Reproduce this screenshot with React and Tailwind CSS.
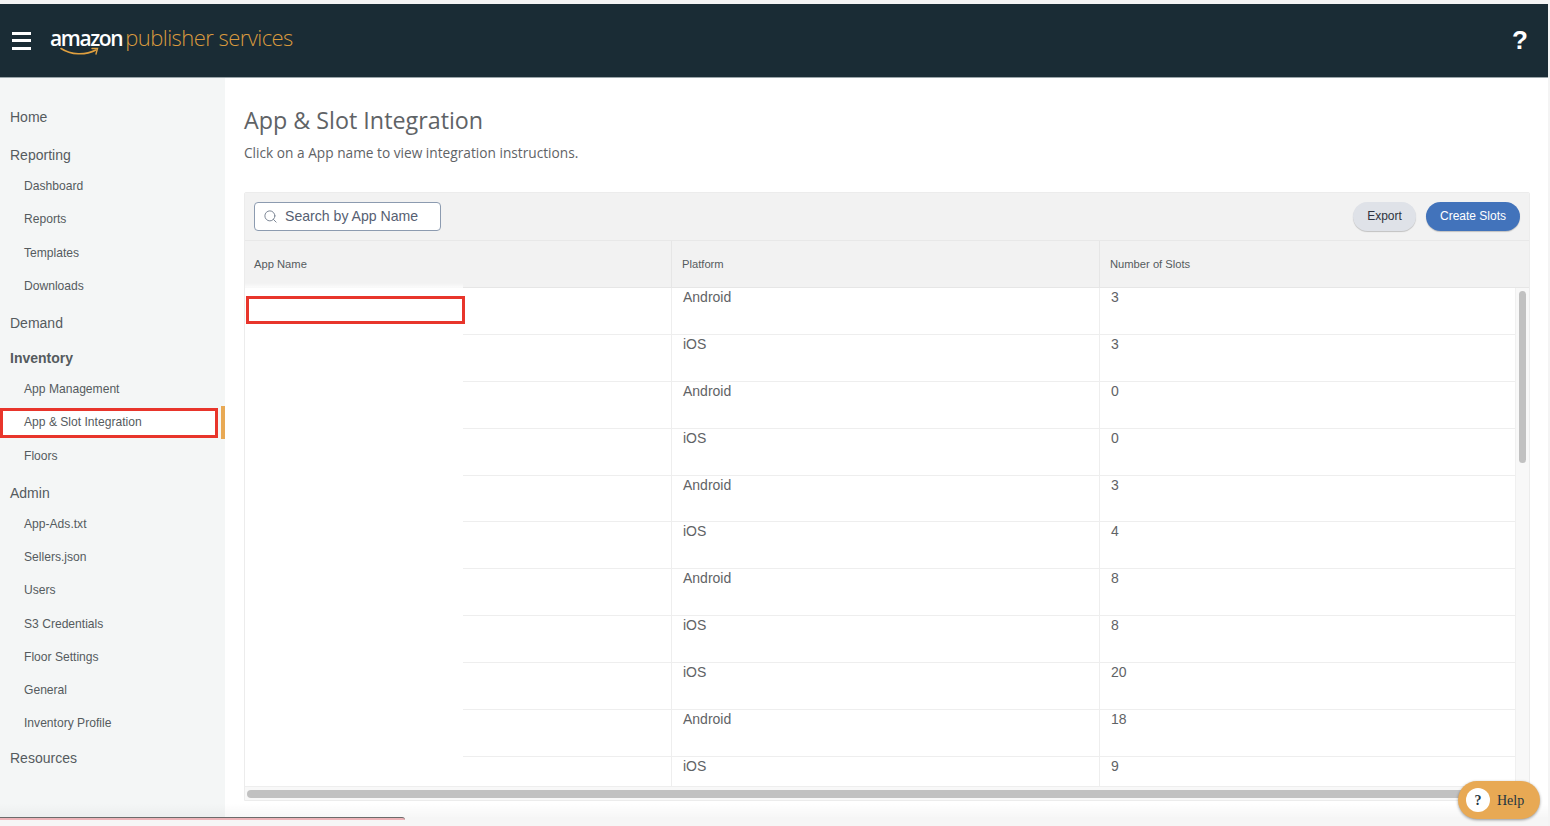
import { Search } from 'lucide-react'

const rows = [
  ['Android', '3'],
  ['iOS', '3'],
  ['Android', '0'],
  ['iOS', '0'],
  ['Android', '3'],
  ['iOS', '4'],
  ['Android', '8'],
  ['iOS', '8'],
  ['iOS', '20'],
  ['Android', '18'],
  ['iOS', '9'],
]

const nav = [
  { label: 'Home', mt: 'mt-[28px]' },
  { label: 'Reporting', mt: 'mt-[16px]', items: ['Dashboard', 'Reports', 'Templates', 'Downloads'] },
  { label: 'Demand', mt: 'mt-[9px]' },
  { label: 'Inventory', mt: 'mt-[13px]', bold: true, items: ['App Management', 'App & Slot Integration', 'Floors'] },
  {
    label: 'Admin',
    mt: 'mt-[9px]',
    items: ['App-Ads.txt', 'Sellers.json', 'Users', 'S3 Credentials', 'Floor Settings', 'General', 'Inventory Profile'],
  },
  { label: 'Resources', mt: 'mt-[6px]' },
]

function Sidebar() {
  return (
    <aside className="w-[225px] shrink-0 bg-[#f4f6f6] font-['Liberation_Sans',sans-serif] text-[#555b5e]">
      {nav.map((group) => (
        <div key={group.label} className={group.mt}>
          <div className={`h-[22px] pl-[10px] text-[14px] leading-[22px] ${group.bold ? 'font-bold' : ''}`}>
            {group.label}
          </div>
          {group.items && (
            <ul className="mt-1">
              {group.items.map((item) => (
                <li key={item} className="relative h-[33.25px] pl-6 text-[12.1px] leading-[33.25px]">
                  {item === 'App & Slot Integration' && (
                    <>
                      <span className="absolute left-0 top-[2px] h-[30px] w-[218px] border-[3px] border-[#e8352b] bg-white" />
                      <span className="absolute left-[221px] top-0 h-[33px] w-1 bg-[#e8a954]" />
                    </>
                  )}
                  <span className="relative">{item}</span>
                </li>
              ))}
            </ul>
          )}
        </div>
      ))}
    </aside>
  )
}

function Table() {
  return (
    <div className="relative mt-[30px] h-[609px] w-[1286px] overflow-hidden rounded-t-[2px] border border-[#ececec] font-['Liberation_Sans',sans-serif]">
      <div className="flex h-[48px] items-center justify-between border-b border-[#e8e8e8] bg-[#f2f2f2] pl-[9px] pr-[9px]">
        <div className="flex h-[29px] w-[187px] items-center gap-[7px] rounded-[4px] border border-[#8c9bb0] bg-white pl-2 text-[14.1px] text-[#566072]">
          <Search size={15} strokeWidth={1.6} className="text-[#7d8796]" />
          Search by App Name
        </div>
        <div className="flex items-center gap-[10px] text-[12px]">
          <button className="h-[29px] w-[63px] rounded-full bg-[#dfe2e8] pb-px text-[#2d3340] shadow-[0_1px_1px_rgba(0,0,0,0.2)]">
            Export
          </button>
          <button className="h-[29px] w-[94px] rounded-full bg-[#4273bb] pb-px text-white shadow-[0_1px_1px_rgba(0,0,0,0.2)]">
            Create Slots
          </button>
        </div>
      </div>
      <div className="grid h-[47px] grid-cols-[426px_428px_1fr] items-center border-b border-[#e6e6e6] bg-[#f2f2f2] text-[11.2px] text-[#555b5e]">
        <div className="pl-[9px]">App Name</div>
        <div className="flex h-full items-center border-l border-[#e6e6e6] pl-[10px]">Platform</div>
        <div className="flex h-full items-center border-l border-[#e6e6e6] pl-[10px]">Number of Slots</div>
      </div>
      <div className="absolute left-0 top-[90px] h-[6px] w-[218px] bg-gradient-to-b from-transparent to-white" />
      <div className="flex h-[498px]">
        <div className="h-full w-[218px] shrink-0 bg-white" />
        <div className="h-full flex-1 overflow-hidden">
          {rows.map((row, i) => (
            <div
              key={i}
              className="grid h-[46.9px] grid-cols-[208px_428px_1fr] border-b border-[#eeeeee] text-[14px] leading-[18px] text-[#5f6366]"
            >
              <div />
              <div className="border-l border-[#eeeeee] pl-[11px]">{row[0]}</div>
              <div className="border-l border-[#eeeeee] pl-[11px]">{row[1]}</div>
            </div>
          ))}
        </div>
        <div className="h-full w-[14px] shrink-0 border-l border-[#f0f0f0] bg-[#f8f8f8] px-[3px] pt-[3px]">
          <div className="h-[172px] rounded-full bg-[#c1c1c1]" />
        </div>
      </div>
      <div className="border-t border-[#eeeeee] bg-[#f8f8f8] px-[2px] py-[3px]">
        <div className="h-[8px] rounded-full bg-[#c1c1c1]" />
      </div>
    </div>
  )
}

export default function App() {
  return (
    <div className="relative flex h-[826px] w-[1550px] flex-col overflow-hidden bg-white">
      <div className="h-1 shrink-0 bg-[#f4f4f4]" />
      <header className="flex h-[74px] w-[1548px] shrink-0 items-center border-b border-[#9aa5a9] bg-[#1a2c35] pl-3 pr-5">
        <div className="flex w-[19px] flex-col gap-[4.5px]">
          <span className="h-[3px] bg-white" />
          <span className="h-[3px] bg-white" />
          <span className="h-[3px] bg-white" />
        </div>
        <div className="relative ml-[19px] -mt-[7px] flex items-baseline font-['Open_Sans',sans-serif] text-[22px] leading-none">
          <span className="text-[21px] font-semibold tracking-[-1.4px] text-white">amazon</span>
          <span className="ml-[3px] font-light tracking-[-0.55px] text-[#d99a3e]">publisher services</span>
          <svg className="absolute left-[10px] top-[21px]" width="40" height="10" viewBox="0 0 40 10" fill="none">
            <path d="M1 1.5C11 8 25 8.5 36 3" stroke="#e0a03f" strokeWidth="1.6" strokeLinecap="round" />
            <path d="M32 1.5L37.5 1.5L36 7" stroke="#e0a03f" strokeWidth="1.4" strokeLinecap="round" />
          </svg>
        </div>
        <span className="ml-auto font-['Liberation_Sans',sans-serif] text-[26px] font-bold text-white">?</span>
      </header>

      <div className="flex min-h-0 flex-1">
        <Sidebar />
        <main className="relative flex-1 pl-[19px]">
          <h1 className="mt-[25px] font-['Open_Sans',sans-serif] text-[23.3px] leading-[34px] text-[#5f6366]">
            App & Slot Integration
          </h1>
          <p className="mt-[7px] font-['Open_Sans',sans-serif] text-[13.7px] leading-[18px] text-[#5f6366]">
            Click on a App name to view integration instructions.
          </p>
          <Table />
          <span className="absolute left-[21px] top-[218px] h-[28px] w-[219px] border-[3px] border-[#e8352b]" />
        </main>
      </div>

      <div className="absolute bottom-[9px] left-0 h-[14px] w-full bg-gradient-to-b from-transparent to-[#00000008]" />
      <div className="absolute bottom-0 left-0 h-[9px] w-full bg-[#f6f6f6]" />
      <div className="absolute bottom-[6px] left-0 h-[3px] w-[405px] rounded-tr-[3px] border-t border-[#6b6b6b] bg-[#eeb3b8]" />
      <div className="absolute right-0 top-1 h-[822px] w-[2px] bg-[#f4f4f4]" />

      <button className="absolute left-[1458px] top-[781px] flex h-[38px] w-[82px] items-center rounded-full bg-[#e8a954] pl-2 font-['Liberation_Serif',serif] text-[14px] text-[#1f3540] shadow-[0_1px_3px_rgba(0,0,0,0.4)]">
        <span className="flex h-6 w-6 items-center justify-center rounded-full bg-white font-bold">?</span>
        <span className="ml-[7px]">Help</span>
      </button>
    </div>
  )
}
